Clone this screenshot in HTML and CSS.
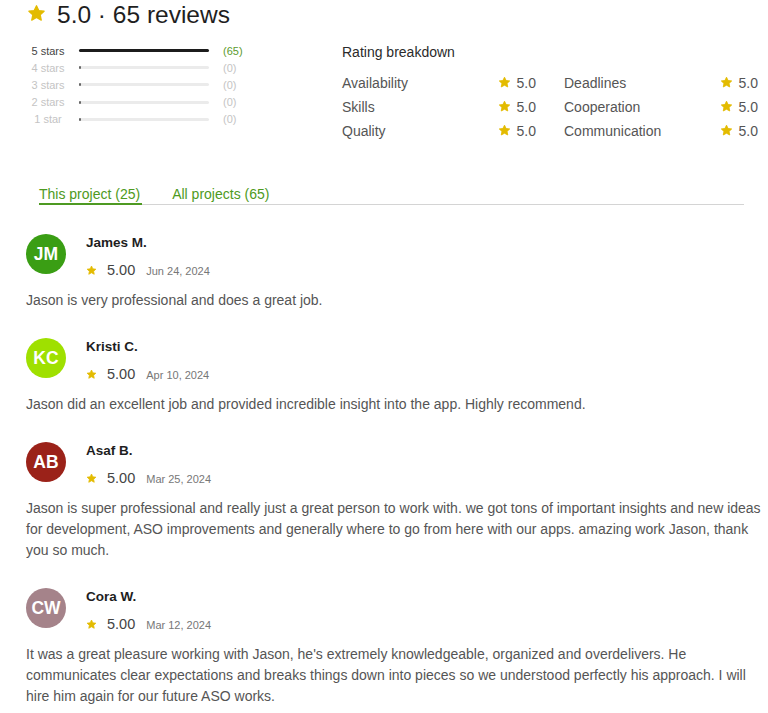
FILE: index.html
```html
<!DOCTYPE html>
<html lang="en">
<head>
<meta charset="utf-8">
<title>Reviews</title>
<link rel="stylesheet" href="styles.css">
</head>
<body>
<svg width="0" height="0" style="position:absolute">
  <defs>
    <symbol id="star" viewBox="0 0 24 24">
      <path d="M12 2.2l2.9 6.1 6.7.8-4.9 4.6 1.3 6.6L12 17l-6 3.3 1.3-6.6-4.9-4.6 6.7-.8z" fill="currentColor" stroke="currentColor" stroke-width="1.6" stroke-linejoin="round"/>
    </symbol>
  </defs>
</svg>
<main class="page">
  <header class="title">
    <svg class="title-star"><use href="#star"/></svg>
    <h1 class="title-text">5.0 · 65 reviews</h1>
  </header>

  <section class="summary">
    <div class="hist">
      <div class="hist-row">
        <span class="hist-label hist-label-on">5 stars</span>
        <span class="hist-bar"><span class="hist-fill" style="width:100%"></span></span>
        <span class="hist-count hist-count-on">(65)</span>
      </div>
      <div class="hist-row">
        <span class="hist-label">4 stars</span>
        <span class="hist-bar"><span class="hist-fill hist-fill-min"></span></span>
        <span class="hist-count">(0)</span>
      </div>
      <div class="hist-row">
        <span class="hist-label">3 stars</span>
        <span class="hist-bar"><span class="hist-fill hist-fill-min"></span></span>
        <span class="hist-count">(0)</span>
      </div>
      <div class="hist-row">
        <span class="hist-label">2 stars</span>
        <span class="hist-bar"><span class="hist-fill hist-fill-min"></span></span>
        <span class="hist-count">(0)</span>
      </div>
      <div class="hist-row">
        <span class="hist-label">1 star</span>
        <span class="hist-bar"><span class="hist-fill hist-fill-min"></span></span>
        <span class="hist-count">(0)</span>
      </div>
    </div>

    <div class="breakdown">
      <h2 class="breakdown-title">Rating breakdown</h2>
      <div class="breakdown-grid">
        <div class="bd-item"><span class="bd-label">Availability</span><span class="bd-score"><svg class="bd-star"><use href="#star"/></svg>5.0</span></div>
        <div class="bd-item"><span class="bd-label">Deadlines</span><span class="bd-score"><svg class="bd-star"><use href="#star"/></svg>5.0</span></div>
        <div class="bd-item"><span class="bd-label">Skills</span><span class="bd-score"><svg class="bd-star"><use href="#star"/></svg>5.0</span></div>
        <div class="bd-item"><span class="bd-label">Cooperation</span><span class="bd-score"><svg class="bd-star"><use href="#star"/></svg>5.0</span></div>
        <div class="bd-item"><span class="bd-label">Quality</span><span class="bd-score"><svg class="bd-star"><use href="#star"/></svg>5.0</span></div>
        <div class="bd-item"><span class="bd-label">Communication</span><span class="bd-score"><svg class="bd-star"><use href="#star"/></svg>5.0</span></div>
      </div>
    </div>
  </section>

  <nav class="tabs">
    <span class="tab tab-active">This project (25)</span>
    <span class="tab">All projects (65)</span>
  </nav>

  <section class="reviews">
    <article class="review">
      <div class="review-head">
        <div class="avatar avatar-jm">JM</div>
        <div class="review-meta">
          <div class="review-name">James M.</div>
          <div class="review-rating"><svg class="review-star"><use href="#star"/></svg><span class="review-score">5.00</span><span class="review-date">Jun 24, 2024</span></div>
        </div>
      </div>
      <p class="review-text">Jason is very professional and does a great job.</p>
    </article>

    <article class="review">
      <div class="review-head">
        <div class="avatar avatar-kc">KC</div>
        <div class="review-meta">
          <div class="review-name">Kristi C.</div>
          <div class="review-rating"><svg class="review-star"><use href="#star"/></svg><span class="review-score">5.00</span><span class="review-date">Apr 10, 2024</span></div>
        </div>
      </div>
      <p class="review-text">Jason did an excellent job and provided incredible insight into the app. Highly recommend.</p>
    </article>

    <article class="review">
      <div class="review-head">
        <div class="avatar avatar-ab">AB</div>
        <div class="review-meta">
          <div class="review-name">Asaf B.</div>
          <div class="review-rating"><svg class="review-star"><use href="#star"/></svg><span class="review-score">5.00</span><span class="review-date">Mar 25, 2024</span></div>
        </div>
      </div>
      <p class="review-text">Jason is super professional and really just a great person to work with. we got tons of important insights and new ideas for development, ASO improvements and generally where to go from here with our apps. amazing work Jason, thank you so much.</p>
    </article>

    <article class="review">
      <div class="review-head">
        <div class="avatar avatar-cw">CW</div>
        <div class="review-meta">
          <div class="review-name">Cora W.</div>
          <div class="review-rating"><svg class="review-star"><use href="#star"/></svg><span class="review-score">5.00</span><span class="review-date">Mar 12, 2024</span></div>
        </div>
      </div>
      <p class="review-text">It was a great pleasure working with Jason, he's extremely knowledgeable, organized and overdelivers. He communicates clear expectations and breaks things down into pieces so we understood perfectly his approach. I will hire him again for our future ASO works.</p>
    </article>
  </section>
</main>
</body>
</html>
```

FILE: styles.css
```css
* { box-sizing: border-box; }

html, body {
  margin: 0;
  padding: 0;
  background: #ffffff;
}

body {
  font-family: "Liberation Sans", Arial, sans-serif;
  color: #222;
}

.page {
  padding: 0 6px 0 26px;
}

/* Title */
.title {
  display: flex;
  align-items: center;
  height: 30px;
}

.title-star {
  width: 19px;
  height: 19px;
  margin-left: 1px;
  margin-top: -4px;
  color: #e3bb00;
}

.title-text {
  margin: 0 0 0 11px;
  font-size: 24.5px;
  font-weight: 400;
  line-height: 30px;
  color: #1f1f1f;
}

/* Summary */
.summary {
  display: flex;
  margin-top: 12px;
}

.hist {
  width: 316px;
  flex: none;
}

.hist-row {
  display: flex;
  align-items: center;
  height: 17.2px;
}

.hist-label {
  width: 44px;
  text-align: center;
  font-size: 11px;
  color: #c4c4c4;
}

.hist-label-on {
  color: #444;
}

.hist-bar {
  width: 130px;
  height: 3px;
  margin-left: 9px;
  border-radius: 2px;
  background: #ebebeb;
  display: flex;
}

.hist-fill {
  height: 100%;
  border-radius: 2px;
  background: #1c1c1c;
}

.hist-fill-min {
  width: 2px;
  background: #666;
}

.hist-count {
  margin-left: 14px;
  font-size: 11px;
  color: #c4c4c4;
}

.hist-count-on {
  color: #5c9a2e;
}

.breakdown {
  width: 416px;
}

.breakdown-title {
  margin: 0;
  font-size: 14px;
  font-weight: 400;
  line-height: 20px;
  color: #2b2b2b;
}

.breakdown-grid {
  display: grid;
  grid-template-columns: 194px 194px;
  column-gap: 28px;
  margin-top: 9px;
}

.bd-item {
  display: flex;
  justify-content: space-between;
  align-items: center;
  height: 24px;
  font-size: 14px;
  color: #555;
}

.bd-score {
  display: flex;
  align-items: center;
  gap: 6px;
  color: #555;
}

.bd-star {
  width: 13px;
  height: 13px;
  margin-top: -2px;
  color: #e3bb00;
}

/* Tabs */
.tabs {
  display: flex;
  gap: 30px;
  margin: 42px 18px 0 13px;
  border-bottom: 1px solid #d4d4d4;
}

.tab {
  font-size: 14px;
  line-height: 18px;
  color: #4e9a22;
  padding-bottom: 0;
}

.tab-active {
  border-bottom: 2px solid #4e9a22;
  margin-bottom: -1px;
  padding-right: 2px;
}

/* Reviews */
.reviews {
  margin-top: 29px;
  display: flex;
  flex-direction: column;
  gap: 27px;
}

.review-head {
  display: flex;
  align-items: flex-start;
  gap: 20px;
}

.avatar {
  width: 40px;
  height: 40px;
  border-radius: 50%;
  display: flex;
  align-items: center;
  justify-content: center;
  color: #fff;
  font-size: 17.5px;
  font-weight: 700;
  flex: none;
}

.avatar-jm { background: #3a9e14; }
.avatar-kc { background: #9fe000; }
.avatar-ab { background: #9b2219; }
.avatar-cw { background: #a5838a; }

.review-meta {
  display: flex;
  flex-direction: column;
}

.review-name {
  font-size: 13.5px;
  font-weight: 700;
  line-height: 18px;
  color: #1e1e1e;
}

.review-rating {
  display: flex;
  align-items: center;
  margin-top: 9px;
  height: 18px;
}

.review-star {
  width: 11px;
  height: 11px;
  color: #e3bb00;
}

.review-score {
  margin-left: 10px;
  font-size: 14.5px;
  color: #444;
}

.review-date {
  margin-left: 11px;
  font-size: 11px;
  color: #777;
  padding-top: 2px;
}

.review-text {
  margin: 11px 0 0 0;
  font-size: 14px;
  line-height: 21px;
  color: #555;
}
```
